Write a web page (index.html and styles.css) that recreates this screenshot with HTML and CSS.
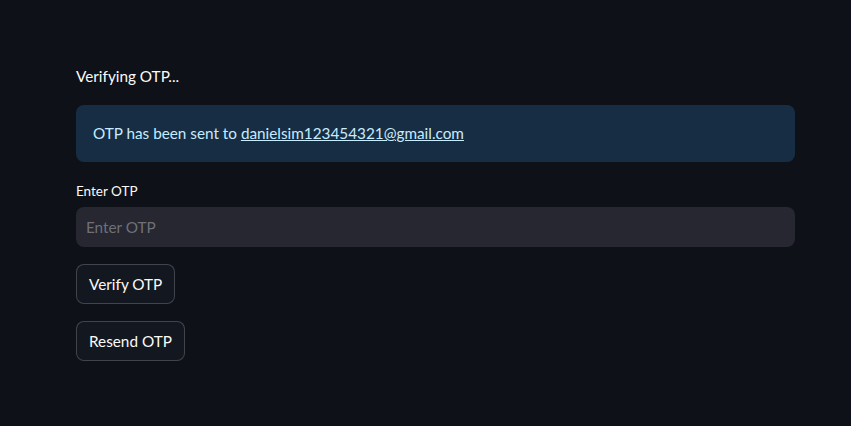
FILE: index.html
```html
<!DOCTYPE html>
<html lang="en">
<head>
<meta charset="utf-8">
<title>Verify OTP</title>
<link rel="stylesheet" href="styles.css">
</head>
<body>
<main class="page">
  <p class="status">Verifying OTP...</p>
  <div class="info">OTP has been sent to <a class="mail" href="#">danielsim123454321@gmail.com</a></div>
  <div class="field">
    <label class="label" for="otp">Enter OTP</label>
    <input class="input" id="otp" type="text" placeholder="Enter OTP">
  </div>
  <div class="btn-row"><button class="btn">Verify OTP</button></div>
  <div class="btn-row"><button class="btn">Resend OTP</button></div>
</main>
</body>
</html>
```
FILE: styles.css
```css
html, body {
  margin: 0;
  padding: 0;
  background: #0e1117;
  height: 100%;
}
body {
  font-family: Lato, "Noto Sans", sans-serif;
  color: #fafafa;
  font-size: 15.3px;
}
.page {
  width: 719px;
  margin-left: 76px;
  padding-top: 64px;
  display: flex;
  flex-direction: column;
  gap: 17px;
}
.status {
  margin: 0;
  line-height: 24px;
  height: 24px;
}
.info {
  background: #172d43;
  color: #c7ebff;
  border-radius: 8px;
  padding: 16px 17px;
  line-height: 25px;
}
.mail {
  color: #c7ebff;
  text-decoration: underline;
}
.field {
  display: flex;
  flex-direction: column;
}
.label {
  font-size: 13.5px;
  line-height: 24px;
  height: 24px;
  margin-bottom: 4px;
  margin-top: 0;
}
.input {
  height: 40px;
  box-sizing: border-box;
  border: none;
  border-radius: 8px;
  background: #262730;
  color: #fafafa;
  font: inherit;
  padding: 0 10px;
  outline: none;
}
.input::placeholder {
  color: #6f7077;
}
.btn-row {
  display: flex;
}
.btn {
  height: 40px;
  box-sizing: border-box;
  border: 1px solid rgba(250, 250, 250, 0.2);
  border-radius: 8px;
  background: #13171f;
  color: #fafafa;
  font: inherit;
  padding: 0 12px;
}
```
